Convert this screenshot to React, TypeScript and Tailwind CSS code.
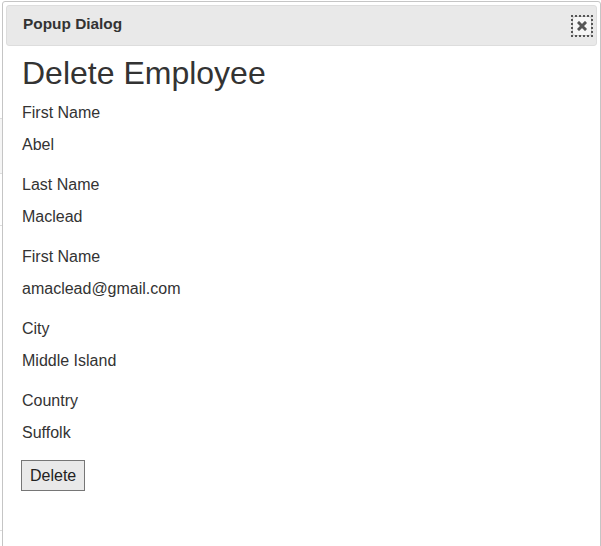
const fields = [
  { label: "First Name", value: "Abel" },
  { label: "Last Name", value: "Maclead" },
  { label: "First Name", value: "amaclead@gmail.com" },
  { label: "City", value: "Middle Island" },
  { label: "Country", value: "Suffolk" },
];

function CloseIcon() {
  return (
    <svg width="10" height="10" viewBox="0 0 10 10" aria-hidden="true">
      <path d="M2 2 L8 8 M8 2 L2 8" stroke="#555555" strokeWidth="3" strokeLinecap="square" />
    </svg>
  );
}

export default function App() {
  return (
    <div className="flex h-[546px] w-[601px] overflow-hidden bg-white font-['Liberation_Sans',Arial,sans-serif] text-[#333333]">
      {/* page behind the dialog, only a sliver shows */}
      <div className="flex w-[2px] shrink-0 flex-col">
        <div className="h-[119px] border-b border-[#dddddd]" />
        <div className="h-[55px] border-b border-[#dddddd] bg-[#f5f5f5]" />
        <div className="h-[52px] border-b border-[#dddddd]" />
        <div className="h-[305px] border-b border-[#dddddd]" />
      </div>

      <div className="mt-[1px] flex h-[560px] w-[599px] shrink-0 flex-col rounded-t-[3px] border border-[#c5c5c5] bg-white p-[3px]">
        <div className="flex h-[41px] items-center justify-between rounded-[3px] border border-[#dddddd] bg-[#e9e9e9] pl-[16px] pr-[3px]">
          <span className="pb-[3px] text-[15.4px] font-bold">Popup Dialog</span>
          <div className="flex h-[22px] w-[22px] items-center justify-center outline-2 outline-dotted outline-[#555555] -outline-offset-2">
            <div className="flex h-[20px] w-[20px] items-center justify-center rounded-[3px] border border-[#c5c5c5] bg-[#f6f6f6]">
              <CloseIcon />
            </div>
          </div>
        </div>

        <div className="flex flex-col px-4 pt-[9px]">
          <h1 className="h-[36px] text-[32px] leading-[36px] font-normal">Delete Employee</h1>
          <div className="mt-[6px] flex flex-col gap-2">
            {fields.map((f, i) => (
              <div key={i} className="flex flex-col text-base">
                <div className="h-8 leading-8">{f.label}</div>
                <div className="h-8 leading-8">{f.value}</div>
              </div>
            ))}
          </div>
          <div className="mt-[11px]">
            <button className="-ml-px h-[31px] border border-[#767676] bg-[#e9e9e9] px-[8px] text-base leading-none text-[#222222]">
              Delete
            </button>
          </div>
        </div>
      </div>
    </div>
  );
}
